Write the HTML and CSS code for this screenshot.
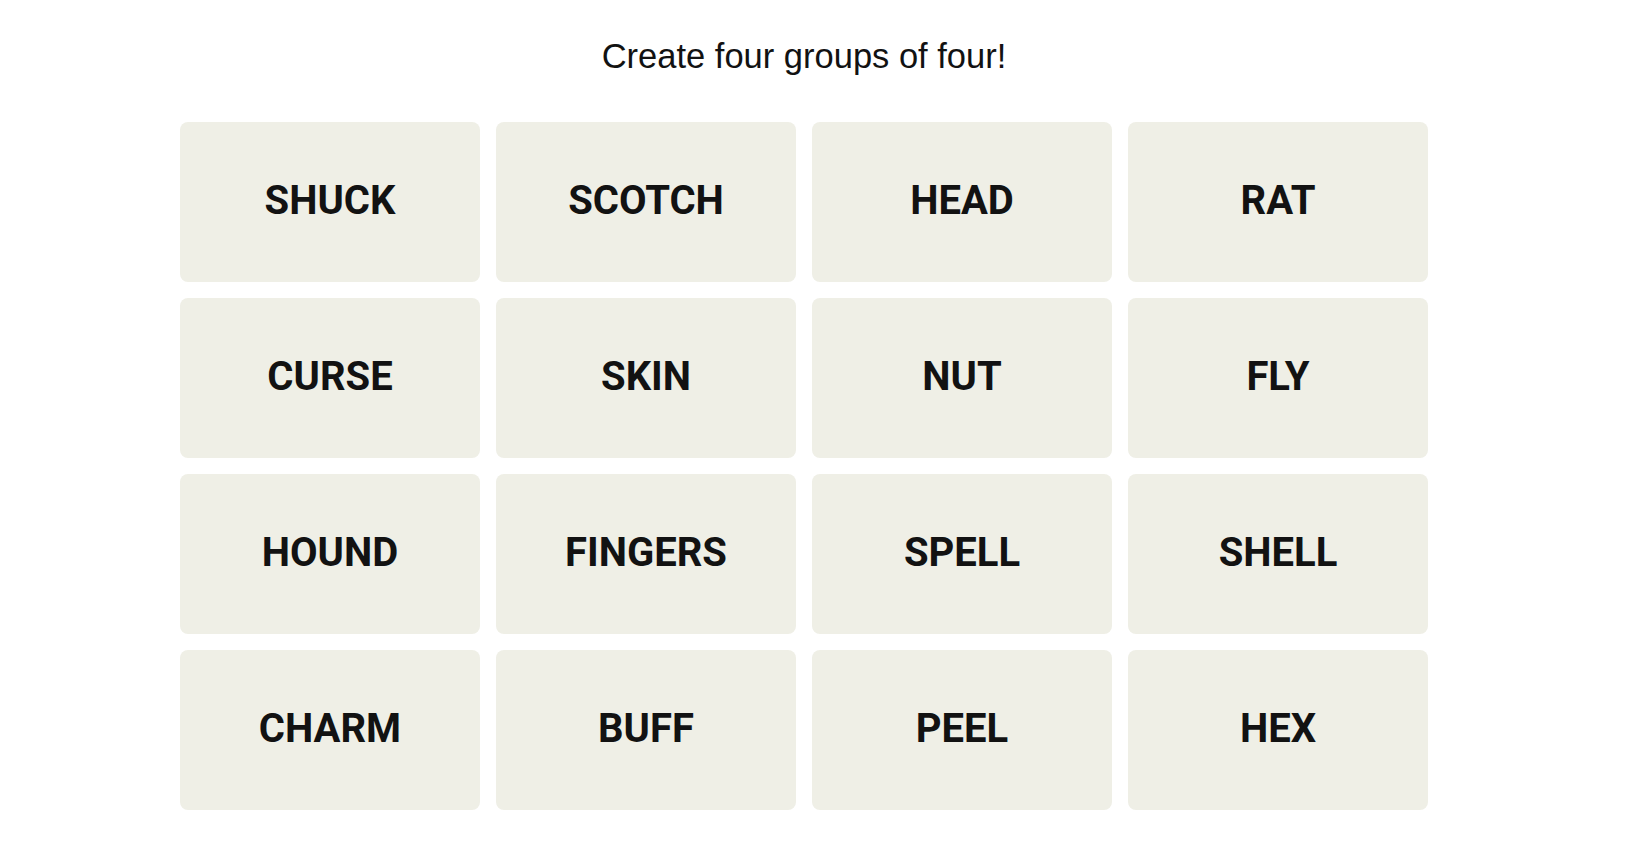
FILE: index.html
```html
<!DOCTYPE html>
<html lang="en">
<head>
<meta charset="utf-8">
<title>Connections</title>
<link rel="stylesheet" href="styles.css">
</head>
<body>
<main class="page">
  <h1 class="prompt">Create four groups of four!</h1>
  <div class="board">
    <button class="tile">SHUCK</button>
    <button class="tile">SCOTCH</button>
    <button class="tile">HEAD</button>
    <button class="tile">RAT</button>
    <button class="tile">CURSE</button>
    <button class="tile">SKIN</button>
    <button class="tile">NUT</button>
    <button class="tile">FLY</button>
    <button class="tile">HOUND</button>
    <button class="tile">FINGERS</button>
    <button class="tile">SPELL</button>
    <button class="tile">SHELL</button>
    <button class="tile">CHARM</button>
    <button class="tile">BUFF</button>
    <button class="tile">PEEL</button>
    <button class="tile">HEX</button>
  </div>
</main>
</body>
</html>
```

FILE: styles.css
```css
html, body {
  margin: 0;
  padding: 0;
  background: #ffffff;
}

.page {
  width: 1608px;
  padding-top: 36px;
  display: flex;
  flex-direction: column;
  align-items: center;
}

.prompt {
  margin: 0;
  font-family: "Liberation Sans", Arial, sans-serif;
  font-weight: 400;
  font-size: 34.5px;
  line-height: 40px;
  color: #121212;
}

.board {
  margin-top: 46px;
  display: grid;
  grid-template-columns: repeat(4, 300px);
  grid-auto-rows: 160px;
  gap: 16px;
}

.tile {
  border: none;
  margin: 0;
  padding: 0 0 3px 0;
  background: #efefe6;
  border-radius: 8px;
  display: flex;
  align-items: center;
  justify-content: center;
  font-family: Roboto, "Liberation Sans", sans-serif;
  font-weight: 700;
  font-size: 40px;
  color: #121212;
  cursor: pointer;
}
```
